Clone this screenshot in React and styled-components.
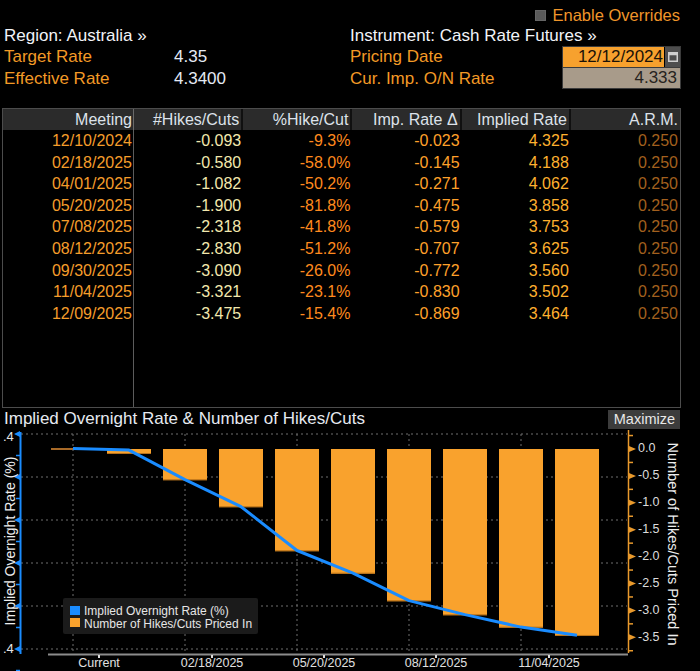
import React from "react"
import styled, { createGlobalStyle } from "styled-components"

const GlobalStyle = createGlobalStyle`
  html, body {
    margin: 0;
    padding: 0;
    background: #000;
  }
  body {
    font-family: "Liberation Sans", Arial, sans-serif;
  }
`

const Page = styled.div`
  width: 700px;
  height: 671px;
  overflow: hidden;
  background: #000;
  display: flex;
  flex-direction: column;
`

const Header = styled.div`
  height: 108px;
  box-sizing: border-box;
  padding: 4px 20px 0 4px;
  display: grid;
  grid-template-columns: 346px 1fr;
  grid-template-rows: 21px repeat(3, 21.5px);
  font-size: 17px;
  white-space: nowrap;
`

const Overrides = styled.div`
  grid-column: 1 / -1;
  justify-self: end;
  display: flex;
  align-items: center;
  gap: 7px;
  padding-top: 2px;
  font-size: 16.5px;
  color: #f0952a;
`

const Checkbox = styled.span`
  width: 11px;
  height: 11px;
  background: #5a5a5a;
  border: 1px solid #666;
  box-sizing: border-box;
`

const InfoRow = styled.div`
  display: flex;
  align-items: center;
`

const Title = styled.span`
  color: #f2f4f8;
`

const Label = styled.span`
  width: ${p => p.$width}px;
  color: #f39a26;
`

const Value = styled.span`
  color: #e4eaf4;
`

const Field = styled.div`
  align-self: flex-start;
  width: 117px;
  height: 20px;
  display: flex;
  box-shadow: 0 0 0 1px #3b3b3b;
`

const DateInput = styled.div`
  flex: 1;
  background: #f7a12e;
  color: #1a1207;
  text-align: right;
  line-height: 20px;
  padding-right: 1px;
`

const CalButton = styled.div`
  width: 15px;
  margin-left: 1px;
  background: #4e4e4e;
  display: flex;
  align-items: center;
  justify-content: center;
`

const ImpInput = styled.div`
  flex: 1;
  background: #a89b8a;
  color: #262320;
  text-align: right;
  line-height: 20px;
  padding-right: 3px;
`

const Table = styled.div`
  margin: 0 19px 0 2px;
  height: 300px;
  box-sizing: border-box;
  border: 1px solid #4c4c4c;
  display: grid;
  grid-template-columns: 131px repeat(5, 1fr);
  grid-template-rows: 21px repeat(9, 21.6px) 1fr;
  font-size: 16px;
  white-space: nowrap;
`

const HeadCell = styled.div`
  background: #2b2b2b;
  color: #dde2ea;
  text-align: right;
  line-height: 21px;
  padding-right: ${p => (p.$first ? 1 : 2)}px;
  border-right: ${p => (p.$first ? "1px solid #6a6a6a" : p.$last ? "none" : "2px solid #101010")};
`

const Cell = styled.div`
  color: ${p => p.$color};
  text-align: right;
  line-height: 21.6px;
  padding-right: ${p => (p.$first ? 1 : 2)}px;
  border-right: ${p => (p.$first ? "1px solid #5c5c5c" : "none")};
`

const Filler = styled.div`
  border-right: ${p => (p.$first ? "1px solid #5c5c5c" : "none")};
  grid-column: ${p => (p.$first ? "auto" : "2 / -1")};
`

const ChartPanel = styled.div`
  flex: 1;
  display: flex;
  flex-direction: column;
`

const ChartBar = styled.div`
  height: 22px;
  display: flex;
  align-items: center;
  justify-content: space-between;
  padding: 0 20px 0 4px;
`

const ChartTitle = styled.span`
  font-size: 17px;
  color: #e6eaf0;
`

const MaxButton = styled.span`
  background: #3c3c3c;
  color: #e8e8e8;
  font-size: 14.5px;
  line-height: 19px;
  padding: 0 5px 0 6px;
`

const columns = ["Meeting", "#Hikes/Cuts", "%Hike/Cut", "Imp. Rate \u0394", "Implied Rate", "A.R.M."]
const colColors = ["#f59d2b", "#f2e8ad", "#ff8a1e", "#ffa02a", "#ffb02f", "#a3601e"]

const rows = [
  ["12/10/2024", "-0.093", "-9.3%", "-0.023", "4.325", "0.250"],
  ["02/18/2025", "-0.580", "-58.0%", "-0.145", "4.188", "0.250"],
  ["04/01/2025", "-1.082", "-50.2%", "-0.271", "4.062", "0.250"],
  ["05/20/2025", "-1.900", "-81.8%", "-0.475", "3.858", "0.250"],
  ["07/08/2025", "-2.318", "-41.8%", "-0.579", "3.753", "0.250"],
  ["08/12/2025", "-2.830", "-51.2%", "-0.707", "3.625", "0.250"],
  ["09/30/2025", "-3.090", "-26.0%", "-0.772", "3.560", "0.250"],
  ["11/04/2025", "-3.321", "-23.1%", "-0.830", "3.502", "0.250"],
  ["12/09/2025", "-3.475", "-15.4%", "-0.869", "3.464", "0.250"],
]

const hikes = rows.map(r => parseFloat(r[1]))
const rates = [4.333, ...rows.map(r => parseFloat(r[4]))]

const ZERO = 19
const PER_HIKE = 53.8
const rateY = r => 4 + (4.4 - r) * 215
const BLUE = "#1a8cff"
const ORANGE = "#f9a22d"

const CalendarIcon = () => (
  <svg width="10" height="11" viewBox="0 0 10 11">
    <rect x="0.75" y="1.75" width="8.5" height="8.5" fill="none" stroke="#cfcfcf" strokeWidth="1.5" />
    <rect x="0.75" y="1.75" width="8.5" height="2.5" fill="#cfcfcf" />
  </svg>
)

const Chart = () => {
  const gridY = [4, 47, 90, 133, 176, 219]
  const gridX = [73, 185, 297, 409, 521]
  const xLabels = [
    ["Current", 99],
    ["02/18/2025", 212],
    ["05/20/2025", 324],
    ["08/12/2025", 436],
    ["11/04/2025", 549],
  ]
  const rightTicks = [0, -0.5, -1, -1.5, -2, -2.5, -3, -3.5]
  const linePts = rates.map((r, i) => `${73 + 56 * i},${rateY(r).toFixed(1)}`).join(" ")

  return (
    <svg width="700" height="241" viewBox="0 0 700 241" style={{ display: "block" }}>
      {gridY.map(y => (
        <line key={"h" + y} x1="21" x2="627" y1={y} y2={y} stroke="#6e6e6e" strokeDasharray="2 3" />
      ))}
      {gridX.map(x => (
        <line key={"v" + x} x1={x} x2={x} y1="4" y2="223" stroke="#6e6e6e" strokeDasharray="2 3" />
      ))}

      <line x1="51" x2="95" y1={ZERO} y2={ZERO} stroke="#a86a28" strokeWidth="2" />
      {hikes.map((v, i) => {
        const h = -v * PER_HIKE
        const x = 107 + 56 * i
        return (
          <g key={i}>
            <rect x={x} y={ZERO} width="44" height={h} fill={ORANGE} />
            <rect x={x} y={ZERO + h - 1} width="44" height="1" fill="#b9721a" />
          </g>
        )
      })}

      <polyline points={linePts} fill="none" stroke={BLUE} strokeWidth="3" strokeLinejoin="round" />

      {/* left axis */}
      <line x1="20.5" x2="20.5" y1="2" y2="224" stroke={BLUE} strokeWidth="2" />
      {gridY.map(y => (
        <g key={"lt" + y}>
          <polygon points={`20,${y - 3} 20,${y + 3} 14,${y}`} fill={BLUE} />
          <line x1="16" x2="20" y1={y + 21.5} y2={y + 21.5} stroke={BLUE} strokeWidth="1.5" />
        </g>
      ))}
      <text x="3" y="11" fontSize="13" fill="#e6e6e6">.4</text>
      <text x="3" y="223" fontSize="13" fill="#e6e6e6">.4</text>
      <text
        transform="translate(11,111) rotate(-90)"
        textAnchor="middle"
        dominantBaseline="middle"
        fontSize="14"
        fill="#eeeeee"
      >
        Implied Overnight Rate (%)
      </text>

      {/* right axis */}
      <line x1="628.5" x2="628.5" y1="0" y2="223" stroke="#e8992c" strokeWidth="1.5" />
      {rightTicks.map((t, k) => {
        const y = ZERO + k * 26.9
        return (
          <g key={"rt" + k}>
            <polygon points={`629,${y - 3} 629,${y + 3} 636,${y}`} fill="#e8992c" />
            <line x1="629" x2="633" y1={y - 13.45} y2={y - 13.45} stroke="#e8992c" strokeWidth="1.5" />
            <text x="638" y={y} dominantBaseline="middle" fontSize="12.5" fill="#dcdcdc">
              {t === 0 ? "0.0" : t.toFixed(1)}
            </text>
          </g>
        )
      })}
      <line x1="629" x2="633" y1={ZERO + 7.5 * 26.9} y2={ZERO + 7.5 * 26.9} stroke="#e8992c" strokeWidth="1.5" />
      <text
        transform="translate(672,114) rotate(90)"
        textAnchor="middle"
        dominantBaseline="middle"
        fontSize="14.5"
        fill="#eeeeee"
      >
        Number of Hikes/Cuts Priced In
      </text>

      {/* x axis */}
      <line x1="48" x2="628" y1="224.5" y2="224.5" stroke="#8c8c8c" strokeWidth="2" />
      {xLabels.map(([t, x]) => (
        <g key={t}>
          <rect x={x - 1} y="225" width="2" height="3" fill="#dddddd" />
          <text x={x} y="236.5" textAnchor="middle" fontSize="12.5" fill="#e0e0e0">
            {t}
          </text>
        </g>
      ))}

      {/* legend */}
      <rect x="63" y="168" width="195" height="36" rx="2" fill="#1b1b1b" />
      <rect x="70" y="176" width="10" height="9" fill={BLUE} />
      <text x="84" y="185" fontSize="12" fill="#e6e6e6">Implied Overnight Rate (%)</text>
      <rect x="70" y="188" width="10" height="9" fill={ORANGE} />
      <text x="84" y="197.5" fontSize="12" fill="#e6e6e6">Number of Hikes/Cuts Priced In</text>
    </svg>
  )
}

const App = () => (
  <>
    <GlobalStyle />
    <Page>
      <Header>
        <Overrides>
          <Checkbox />
          Enable Overrides
        </Overrides>

        <InfoRow>
          <Title>Region: Australia »</Title>
        </InfoRow>
        <InfoRow>
          <Title>Instrument: Cash Rate Futures »</Title>
        </InfoRow>

        <InfoRow>
          <Label $width={170}>Target Rate</Label>
          <Value>4.35</Value>
        </InfoRow>
        <InfoRow>
          <Label $width={213}>Pricing Date</Label>
          <Field>
            <DateInput>12/12/2024</DateInput>
            <CalButton>
              <CalendarIcon />
            </CalButton>
          </Field>
        </InfoRow>

        <InfoRow>
          <Label $width={170}>Effective Rate</Label>
          <Value>4.3400</Value>
        </InfoRow>
        <InfoRow>
          <Label $width={213}>Cur. Imp. O/N Rate</Label>
          <Field>
            <ImpInput>4.333</ImpInput>
          </Field>
        </InfoRow>
      </Header>

      <Table>
        {columns.map((c, i) => (
          <HeadCell key={c} $first={i === 0} $last={i === columns.length - 1}>
            {c}
          </HeadCell>
        ))}
        {rows.map(r =>
          r.map((v, i) => (
            <Cell key={r[0] + i} $first={i === 0} $color={colColors[i]}>
              {v}
            </Cell>
          ))
        )}
        <Filler $first />
        <Filler />
      </Table>

      <ChartPanel>
        <ChartBar>
          <ChartTitle>Implied Overnight Rate &amp; Number of Hikes/Cuts</ChartTitle>
          <MaxButton>Maximize</MaxButton>
        </ChartBar>
        <Chart />
      </ChartPanel>
    </Page>
  </>
)

export default App
